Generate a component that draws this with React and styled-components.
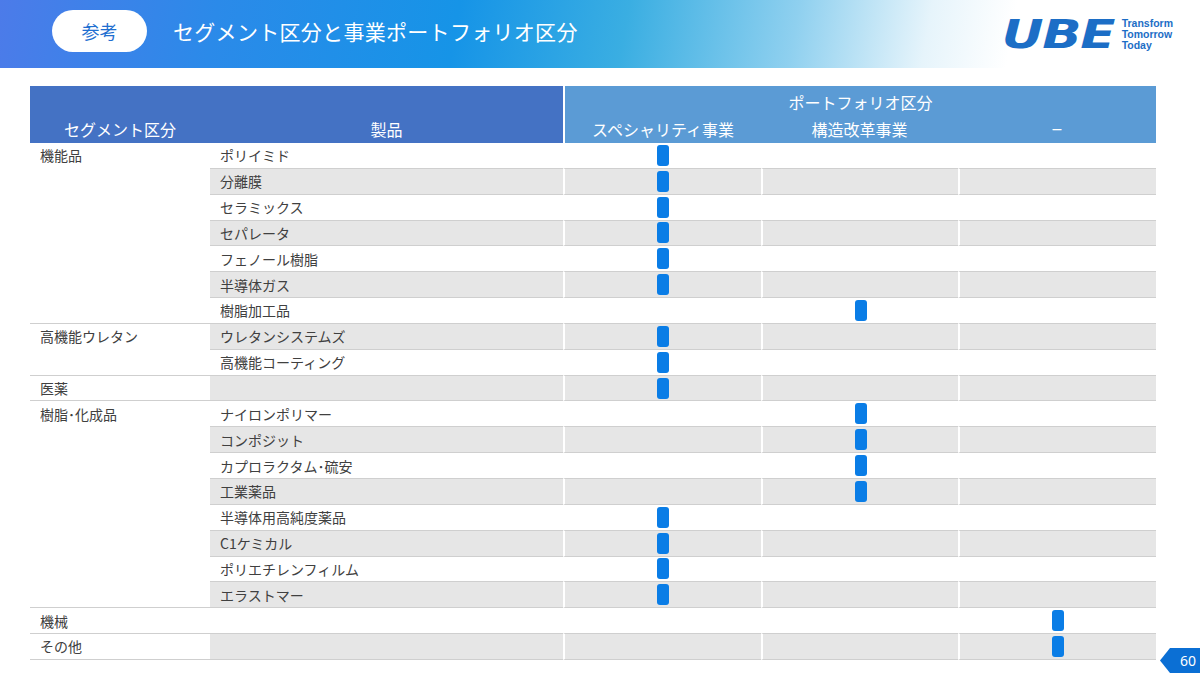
import React from "react";
import styled, { createGlobalStyle } from "styled-components";

const GlobalStyle = createGlobalStyle`
  body {
    margin: 0;
    background: #fff;
    font-family: "Noto Sans CJK JP", "Noto Sans", sans-serif;
  }
`;

const Page = styled.div`
  position: relative;
  width: 1200px;
  height: 675px;
  overflow: hidden;
  background: #fff;
`;

const TopBar = styled.header`
  height: 68px;
  box-sizing: border-box;
  padding: 0 0 6px 52px;
  display: flex;
  align-items: center;
  background: linear-gradient(100deg, #4c7be9 0%, #2b8ae9 18%, #1694e7 38%, #3aaee2 52%, #8fd0ef 66%, #e6f4fb 77%, #ffffff 84%);
`;

const Pill = styled.div`
  width: 95px;
  height: 42px;
  border-radius: 21px;
  background: #fff;
  color: #1f6fd0;
  font-size: 18px;
  display: flex;
  align-items: center;
  justify-content: center;
`;

const Title = styled.h1`
  margin: 0 0 0 26px;
  font-size: 21px;
  font-weight: 400;
  color: #fff;
  letter-spacing: 0.3px;
`;

const Logo = styled.div`
  margin-left: auto;
  margin-right: 27px;
  margin-top: 6px;
  display: flex;
  align-items: center;
  gap: 8px;
  color: #1c6ec6;
`;

const LogoMark = styled.span`
  display: inline-block;
  font-family: "DejaVu Sans", sans-serif;
  font-weight: 900;
  font-style: italic;
  font-size: 39px;
  line-height: 1;
  letter-spacing: -1px;
  transform: scaleX(1.32);
  transform-origin: right center;
`;

const Tagline = styled.div`
  display: flex;
  flex-direction: column;
  font-family: "Liberation Sans", Arial, sans-serif;
  font-weight: 700;
  font-size: 10.5px;
  line-height: 11px;
`;

const Table = styled.div`
  width: 1126px;
  margin: 18px 0 0 30px;
`;

const HeadRow = styled.div`
  display: grid;
  grid-template-columns: 533px 593px;
  height: 57px;
`;

const HeadLeft = styled.div`
  background: #4472c4;
  display: grid;
  grid-template-columns: 180px 353px;
  align-items: end;
  color: #fff;
  font-size: 16px;
`;

const HeadRight = styled.div`
  background: #5b9bd5;
  border-left: 2px solid #fff;
  display: grid;
  grid-template-columns: 196px 197px 198px;
  grid-template-rows: 1fr auto;
  color: #fff;
  font-size: 16px;
`;

const HeadLabel = styled.div`
  text-align: center;
  padding-bottom: ${(p) => p.$pb ?? 2}px;
  grid-column: ${(p) => p.$span || "auto"};
  align-self: ${(p) => p.$align || "end"};
  padding-top: ${(p) => p.$pt || 0}px;
  font-family: ${(p) => (p.$latin ? '"Liberation Sans", Arial, sans-serif' : "inherit")};
`;

const Row = styled.div`
  display: grid;
  grid-template-columns: 180px 353px 198px 197px 198px;
  height: 25.85px;
`;

const SegCell = styled.div`
  background: #fff;
  color: #404040;
  font-size: 14px;
  padding-left: 10px;
  display: flex;
  align-items: center;
  border-bottom: ${(p) => (p.$end ? "1.5px solid #cfcfcf" : "1.5px solid transparent")};
`;

const ProdCell = styled.div`
  background: ${(p) => (p.$alt ? "#e6e6e6" : "#fff")};
  color: #404040;
  font-size: 14px;
  padding-left: 10px;
  display: flex;
  align-items: center;
  border-bottom: 1.5px solid #cfcfcf;
`;

const MarkCell = styled.div`
  background: ${(p) => (p.$alt ? "#e6e6e6" : "#fff")};
  border-left: 2px solid #fff;
  border-bottom: 1.5px solid #cfcfcf;
  display: flex;
  align-items: center;
  justify-content: center;
`;

const Marker = styled.span`
  width: 12px;
  height: 21px;
  border-radius: 3px;
  background: #0a7de6;
`;

const PageNo = styled.div`
  position: absolute;
  right: 0;
  bottom: 2px;
  width: 40px;
  height: 25px;
  background: #0b6fd4;
  clip-path: polygon(0 50%, 10px 0, 100% 0, 100% 100%, 10px 100%);
  color: #fff;
  font-family: "Noto Sans", sans-serif;
  font-size: 14px;
  display: flex;
  align-items: center;
  justify-content: flex-end;
  padding-right: 4px;
  box-sizing: border-box;
`;

// mark: 0 = スペシャリティ, 1 = 構造改革, 2 = –
const rows = [
  { seg: "機能品", prod: "ポリイミド", mark: 0 },
  { prod: "分離膜", mark: 0 },
  { prod: "セラミックス", mark: 0 },
  { prod: "セパレータ", mark: 0 },
  { prod: "フェノール樹脂", mark: 0 },
  { prod: "半導体ガス", mark: 0 },
  { prod: "樹脂加工品", mark: 1, end: true },
  { seg: "高機能ウレタン", prod: "ウレタンシステムズ", mark: 0 },
  { prod: "高機能コーティング", mark: 0, end: true },
  { seg: "医薬", prod: "", mark: 0, end: true },
  { seg: "樹脂･化成品", prod: "ナイロンポリマー", mark: 1 },
  { prod: "コンポジット", mark: 1 },
  { prod: "カプロラクタム･硫安", mark: 1 },
  { prod: "工業薬品", mark: 1 },
  { prod: "半導体用高純度薬品", mark: 0 },
  { prod: "C1ケミカル", mark: 0 },
  { prod: "ポリエチレンフィルム", mark: 0 },
  { prod: "エラストマー", mark: 0, end: true },
  { seg: "機械", prod: "", mark: 2, end: true },
  { seg: "その他", prod: "", mark: 2, end: true },
];

const App = () => {
  return (
    <Page>
      <GlobalStyle />
      <TopBar>
        <Pill>参考</Pill>
        <Title>セグメント区分と事業ポートフォリオ区分</Title>
        <Logo>
          <LogoMark>UBE</LogoMark>
          <Tagline>
            <span>Transform</span>
            <span>Tomorrow</span>
            <span>Today</span>
          </Tagline>
        </Logo>
      </TopBar>

      <Table>
        <HeadRow>
          <HeadLeft>
            <HeadLabel>セグメント区分</HeadLabel>
            <HeadLabel>製品</HeadLabel>
          </HeadLeft>
          <HeadRight>
            <HeadLabel $span="1 / 4" $align="start" $pt={4} $pb={0}>ポートフォリオ区分</HeadLabel>
            <HeadLabel>スペシャリティ事業</HeadLabel>
            <HeadLabel>構造改革事業</HeadLabel>
            <HeadLabel $latin $pb={5}>–</HeadLabel>
          </HeadRight>
        </HeadRow>

        {rows.map((r, i) => {
          const alt = i % 2 === 1;
          return (
            <Row key={i}>
              <SegCell $end={r.end}>{r.seg || ""}</SegCell>
              <ProdCell $alt={alt}>{r.prod}</ProdCell>
              {[0, 1, 2].map((c) => (
                <MarkCell key={c} $alt={alt}>
                  {r.mark === c && <Marker />}
                </MarkCell>
              ))}
            </Row>
          );
        })}
      </Table>

      <PageNo>60</PageNo>
    </Page>
  );
};

export default App;
